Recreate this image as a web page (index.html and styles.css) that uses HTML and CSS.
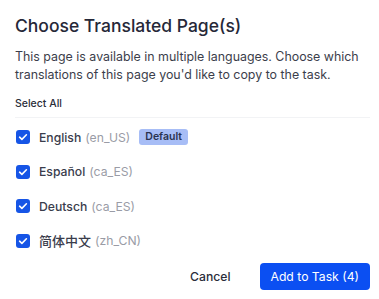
FILE: index.html
```html
<!DOCTYPE html>
<html lang="en">
<head>
    <meta charset="UTF-8">
    <title>Choose Translated Page(s)</title>
    <link rel="stylesheet" href="styles.css">
</head>
<body>
    <div class="dialog">
        <h2>Choose Translated Page(s)</h2>
        <p class="intro">This page is available in multiple languages. Choose which translations of this page you'd like to copy to the task.</p>

        <div class="select-all">Select All</div>

        <ul class="langs">
            <li>
                <span class="check"><svg viewBox="0 0 14 14"><path d="M3.6 7.2l2.3 2.2 4.5-4.6"/></svg></span>
                <span class="name">English</span> <span class="code">(en_US)</span>
                <span class="badge">Default</span>
            </li>
            <li>
                <span class="check"><svg viewBox="0 0 14 14"><path d="M3.6 7.2l2.3 2.2 4.5-4.6"/></svg></span>
                <span class="name">Español</span> <span class="code">(ca_ES)</span>
            </li>
            <li>
                <span class="check"><svg viewBox="0 0 14 14"><path d="M3.6 7.2l2.3 2.2 4.5-4.6"/></svg></span>
                <span class="name">Deutsch</span> <span class="code">(ca_ES)</span>
            </li>
            <li>
                <span class="check"><svg viewBox="0 0 14 14"><path d="M3.6 7.2l2.3 2.2 4.5-4.6"/></svg></span>
                <span class="name cjk">简体中文</span> <span class="code">(zh_CN)</span>
            </li>
        </ul>

        <div class="actions">
            <button class="cancel">Cancel</button>
            <button class="primary">Add to Task (4)</button>
        </div>
    </div>
</body>
</html>
```

FILE: styles.css
```css
body { margin: 0; background: #ffffff; font-family: Inter, "Noto Sans CJK SC", sans-serif; color: #2a2d3a; }
.dialog { padding: 15px 9px 0 15px; }
h2 { margin: 0; font-size: 17.5px; font-weight: 500; line-height: 22px; color: #262838; }
.intro { margin: 11px 0 0; font-size: 12.4px; line-height: 18px; color: #3b3e4b; }
.select-all { margin-top: 13px; padding: 0 0 7px 0; font-size: 10.5px; line-height: 13px; font-weight: 500; color: #2a2d3a; border-bottom: 1px solid #f2f3f5; }
.langs { list-style: none; margin: 0; padding: 2px 0 0 1px; }
.langs li { display: flex; align-items: center; height: 34.5px; font-size: 12.2px; }
.check { width: 14px; height: 14px; border-radius: 3px; background: #1655e6; display: inline-flex; margin-right: 9px; }
.check svg { width: 14px; height: 14px; fill: none; stroke: #ffffff; stroke-width: 1.6; stroke-linecap: round; stroke-linejoin: round; }
.name { color: #3a3d4c; font-weight: 500; }
.name.cjk { font-size: 13px; }
.code { color: #9a9ca6; margin-left: 4px; }
.badge { margin-left: 9px; background: #a7bdf6; color: #2a3350; font-size: 10.5px; font-weight: 600; line-height: 12px; padding: 2px 6px; border-radius: 3px; }
.actions { display: flex; justify-content: flex-end; align-items: center; gap: 29px; margin-top: 4.5px; }
button { font-family: inherit; font-size: 12.2px; border: none; cursor: pointer; }
.cancel { background: none; color: #2a2d3a; font-weight: 500; padding: 0; }
.primary { background: #0b4ff2; color: #ffffff; padding: 0 11px; height: 27px; border-radius: 4px; }
```
